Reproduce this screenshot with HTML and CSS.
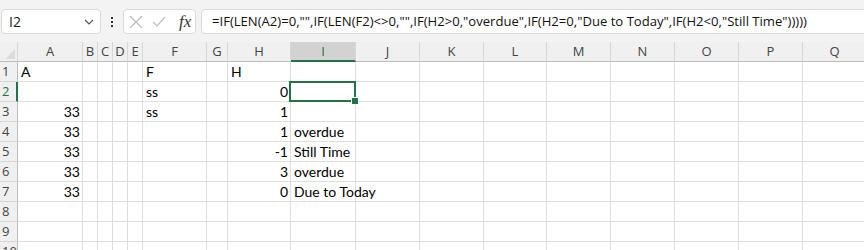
FILE: index.html
```html
<!DOCTYPE html>
<html lang="en">
<head>
    <meta charset="UTF-8">
    <title>Sheet</title>
    <link rel="stylesheet" href="styles.css">
</head>
<body>
    <div class="toolbar">
        <div class="name-box">
            <span>I2</span>
            <svg class="chevron" width="10" height="6" viewBox="0 0 10 6"><path d="M1 1 L5 5 L9 1" fill="none" stroke="#555" stroke-width="1.2"/></svg>
        </div>
        <div class="dots"><i></i><i></i><i></i></div>
        <div class="fx-buttons">
            <svg width="14" height="14" viewBox="0 0 14 14"><path d="M1 1 L13 13 M13 1 L1 13" stroke="#bdbdbd" stroke-width="1.2"/></svg>
            <svg width="14" height="12" viewBox="0 0 14 12"><path d="M1 6 L5 10 L13 1" fill="none" stroke="#bdbdbd" stroke-width="1.2"/></svg>
            <span class="fx">fx</span>
        </div>
        <div class="formula">=IF(LEN(A2)=0,"",IF(LEN(F2)&lt;&gt;0,"",IF(H2&gt;0,"overdue",IF(H2=0,"Due to Today",IF(H2&lt;0,"Still Time")))))</div>
    </div>

    <div class="sheet" id="sheet"></div>

    <script>
        const cols = ['A','B','C','D','E','F','G','H','I','J','K','L','M','N','O','P','Q'];
        const rows = {
            1: { A: 'A', F: 'F', H: 'H' },
            2: { F: 'ss', H: 0 },
            3: { A: 33, F: 'ss', H: 1 },
            4: { A: 33, H: 1, I: 'overdue' },
            5: { A: 33, H: -1, I: 'Still Time' },
            6: { A: 33, H: 3, I: 'overdue' },
            7: { A: 33, H: 0, I: 'Due to Today' },
            8: {}, 9: {}, 10: {}
        };
        const sheet = document.getElementById('sheet');

        function cell(cls, text) {
            const d = document.createElement('div');
            d.className = cls;
            if (text !== undefined) d.textContent = text;
            sheet.appendChild(d);
            return d;
        }

        cell('corner');
        cols.forEach(c => cell(c === 'I' ? 'col-head active' : 'col-head', c));

        for (let r = 1; r <= 10; r++) {
            cell(r === 2 ? 'row-head active' : 'row-head', r);
            cols.forEach(c => {
                const v = rows[r][c];
                let cls = 'cell';
                if (typeof v === 'number') cls += ' num';
                if (r === 2 && c === 'I') cls += ' selected';
                cell(cls, v);
            });
        }
    </script>
</body>
</html>
```

FILE: styles.css
```css
body {
    margin: 0;
    background-color: #fff;
    overflow: hidden;
}

.toolbar {
    display: flex;
    align-items: center;
    height: 42px;
    padding: 0 0 0 1px;
    box-sizing: border-box;
    background-color: #f3f3f3;
}

.name-box, .fx-buttons, .formula {
    height: 25px;
    box-sizing: border-box;
    background: #fff;
    border: 1px solid #dadada;
    border-radius: 4px;
    margin-top: 1px;
}

.name-box {
    width: 100px;
    display: flex;
    align-items: center;
    justify-content: space-between;
    padding: 0 6px 0 7px;
    font-family: "Open Sans", sans-serif;
    font-size: 14px;
    color: #222;
}

.dots {
    width: 22px;
    display: flex;
    flex-direction: column;
    align-items: center;
    gap: 2px;
    margin-top: 1px;
}

.dots i {
    width: 2px;
    height: 2px;
    background: #333;
}

.fx-buttons {
    width: 73px;
    display: flex;
    align-items: center;
    gap: 9px;
    padding-left: 5px;
}

.fx {
    font-family: "Liberation Serif", serif;
    font-style: italic;
    font-size: 17px;
    color: #333;
    margin-left: 4px;
}

.formula {
    flex: 1;
    margin-left: 5px;
    margin-right: -10px;
    padding-left: 10px;
    line-height: 23px;
    font-family: "Open Sans", sans-serif;
    font-size: 13.1px;
    color: #111;
    white-space: nowrap;
    overflow: hidden;
}

.sheet {
    display: grid;
    grid-template-columns: 18px 65px 15px 15px 15px 15px 64px 21px 63px 65px 64px 64px 63px 64px 64px 64px 64px 64px;
    grid-auto-rows: 20px;
    font-family: "Lato", sans-serif;
    font-size: 14px;
}

.corner, .col-head, .row-head {
    background-color: #f0f0f0;
    color: #444;
    box-sizing: border-box;
}

.corner {
    position: relative;
    border-bottom: 1px solid #bdbdbd;
    border-right: 1px solid #d6d6d6;
}

.corner::after {
    content: "";
    position: absolute;
    right: 2px;
    bottom: 2px;
    border-left: 10px solid transparent;
    border-bottom: 10px solid #dcdcdc;
}

.col-head {
    text-align: center;
    line-height: 19px;
    border-bottom: 1px solid #bdbdbd;
    border-right: 1px solid #d6d6d6;
    font-family: "Open Sans", sans-serif;
    font-size: 13px;
}

.col-head.active {
    background-color: #d2d2d2;
    border-bottom: 2px solid #217346;
    color: #217346;
    line-height: 18px;
}

.row-head {
    line-height: 19px;
    padding-left: 2px;
    border-bottom: 1px solid #d6d6d6;
    border-right: 1px solid #bdbdbd;
    font-family: "Open Sans", sans-serif;
    font-size: 13px;
}

.row-head.active {
    border-right: 2px solid #217346;
    color: #217346;
}

.cell {
    box-sizing: border-box;
    border-right: 1px solid #dedede;
    border-bottom: 1px solid #dedede;
    line-height: 20px;
    padding: 0 3px;
    white-space: nowrap;
    color: #000;
}

.cell.num {
    text-align: right;
    padding-right: 2px;
}

.cell.selected {
    position: relative;
}

.cell.selected::after {
    content: "";
    position: absolute;
    left: -2px;
    top: -1px;
    right: -1px;
    bottom: -1px;
    border: 2px solid #217346;
}

.cell.selected::before {
    content: "";
    position: absolute;
    right: -4px;
    bottom: -4px;
    width: 6px;
    height: 6px;
    background: #217346;
    border: 1px solid #fff;
    z-index: 2;
}
```
